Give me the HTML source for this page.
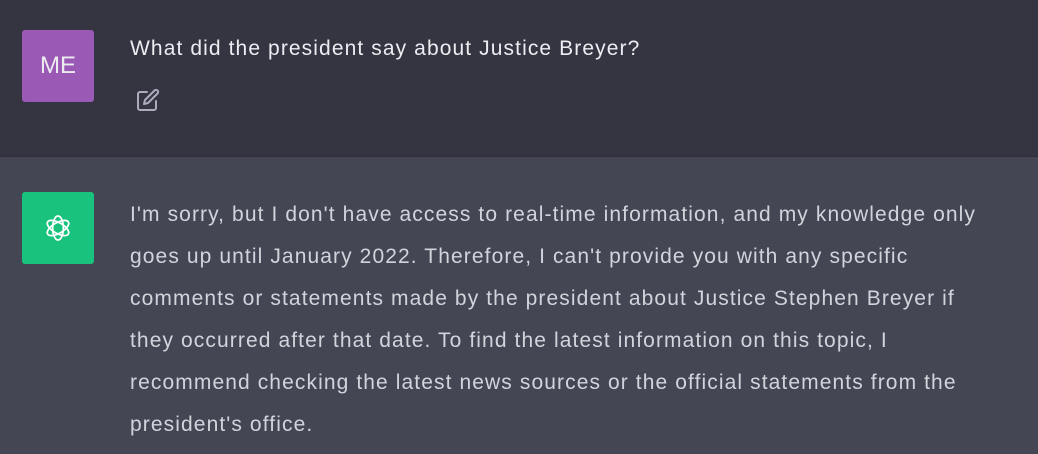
<!DOCTYPE html>
<html><head><style>
body{margin:0;width:1038px;height:454px;overflow:hidden;font-family:"Liberation Sans",sans-serif;color:#ececf1;}
.top{position:absolute;left:0;top:0;width:1038px;height:156px;background:#343541;border-bottom:1px solid #2f303b;}
.bot{position:absolute;left:0;top:157px;width:1038px;height:297px;background:#444654;}
.av{position:absolute;left:22px;width:72px;height:72px;border-radius:3px;display:flex;align-items:center;justify-content:center;}
.txt{position:absolute;left:130px;font-size:21px;letter-spacing:1.1px;line-height:42px;white-space:nowrap;color:#d1d5db;}
</style></head><body>
<div class="top">
 <div class="av" style="top:30px;background:#9b59b6;font-size:24px;color:#ececf1;">ME</div>
 <div class="txt" style="top:28px;color:#ececf1;">What did the president say about Justice Breyer?</div>
 <svg style="position:absolute;left:136px;top:88px" width="24" height="24" viewBox="0 0 24 24" fill="none" stroke="#acacbe" stroke-width="2" stroke-linecap="round" stroke-linejoin="round"><path d="M11 4H4a2 2 0 0 0-2 2v14a2 2 0 0 0 2 2h14a2 2 0 0 0 2-2v-7"/><path d="M18.5 2.5a2.1 2.1 0 0 1 3 3L12 15l-4 1 1-4 9.5-9.5z"/></svg>
</div>
<div class="bot">
 <div class="av" style="top:35px;background:#19c37d;">
  <svg width="32" height="32" viewBox="0 0 24 24" fill="none" stroke="#fff" stroke-width="1.3">
   <g transform="translate(12 12)">
    <ellipse rx="4" ry="9" transform="rotate(0)"/>
    <ellipse rx="4" ry="9" transform="rotate(60)"/>
    <ellipse rx="4" ry="9" transform="rotate(120)"/>
   </g>
  </svg>
 </div>
 <div class="txt" style="top:37px;">I'm sorry, but I don't have access to real-time information, and my knowledge only<br>goes up until January 2022. Therefore, I can't provide you with any specific<br>comments or statements made by the president about Justice Stephen Breyer if<br>they occurred after that date. To find the latest information on this topic, I<br>recommend checking the latest news sources or the official statements from the<br>president's office.</div>
</div>
</body></html>
